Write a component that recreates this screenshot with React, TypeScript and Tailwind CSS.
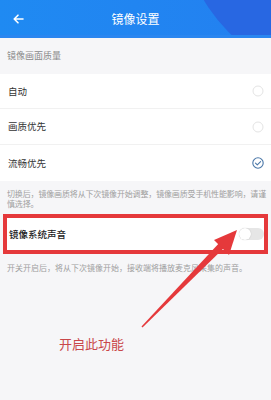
import React from "react";

const font = { fontFamily: '"Noto Sans CJK SC", "Noto Sans", sans-serif' };

function Radio({ checked }: { checked?: boolean }) {
  if (checked) {
    return (
      <svg width="12" height="12" viewBox="0 0 12 12">
        <circle cx="6" cy="6" r="5.2" fill="none" stroke="#4a77a8" strokeWidth="1.1" />
        <path d="M3.5 6.2 L5.3 7.9 L8.6 4.6" fill="none" stroke="#4a77a8" strokeWidth="1.1" strokeLinecap="round" strokeLinejoin="round" />
      </svg>
    );
  }
  return (
    <svg width="12" height="12" viewBox="0 0 12 12">
      <circle cx="6" cy="6" r="5" fill="none" stroke="#e4e4e4" strokeWidth="1" />
    </svg>
  );
}

export default function App() {
  return (
    <div className="relative w-[271px] h-[400px] overflow-hidden bg-[#f6f6f8]" style={font}>
      {/* Header */}
      <div className="relative h-[38px] overflow-hidden bg-gradient-to-r from-[#1f8af2] to-[#2380f0] flex items-center">
        <div className="absolute left-[182px] top-[-238px] w-[316px] h-[316px] rounded-full bg-[#2867e2]" />
        <div className="absolute left-0 right-0 bottom-0 h-[3px] bg-[#2a86f0]" />
        <div className="relative w-full flex items-center">
          <svg className="ml-[13px]" width="11" height="10" viewBox="0 0 11 10">
            <path d="M10 5 H1.5 M5 1.2 L1.2 5 L5 8.8" fill="none" stroke="#ffffff" strokeWidth="1.6" strokeLinecap="round" strokeLinejoin="round" />
          </svg>
          <div className="absolute left-0 right-0 text-center text-white text-[12px] leading-none">镜像设置</div>
        </div>
      </div>

      {/* Section header */}
      <div className="h-[36px] flex items-center pl-[7px] text-[9px] text-[#8a8a8a]">镜像画面质量</div>

      {/* Options */}
      <div className="bg-white">
        <div className="h-[35px] flex items-center justify-between pl-[8px] pr-[7px] border-b border-[#f1f1f1]">
          <span className="text-[9.5px] text-[#333]">自动</span>
          <Radio />
        </div>
        <div className="h-[36px] flex items-center justify-between pl-[8px] pr-[7px] border-b border-[#f1f1f1]">
          <span className="text-[9.5px] text-[#333]">画质优先</span>
          <Radio />
        </div>
        <div className="h-[36px] flex items-center justify-between pl-[8px] pr-[7px]">
          <span className="text-[9.5px] text-[#333]">流畅优先</span>
          <Radio checked />
        </div>
      </div>

      {/* Description */}
      <div className="h-[33px] pl-[7px] pr-0 pt-[8px] text-[8px] leading-[10px] tracking-[-0.15px] text-[#a0a0a0]">
        切换后，镜像画质将从下次镜像开始调整，镜像画质受手机性能影响，请谨慎选择。
      </div>

      {/* Highlighted row */}
      <div className="mx-[3px] h-[40px] border-[4px] border-[#e5393b] bg-white flex items-center justify-between pl-[2px] pr-0">
        <span className="text-[9.5px] text-[#222] font-medium">镜像系统声音</span>
        <div className="w-[25px] h-[12px] rounded-full bg-[#e6e6e6] relative">
          <div className="absolute left-0 top-0 w-[12px] h-[12px] rounded-full bg-white shadow-[0_0_1px_rgba(0,0,0,0.25)]" />
        </div>
      </div>

      <div className="pl-[7px] pt-[9px] text-[8px] leading-[10px] text-[#a0a0a0]">
        开关开启后，将从下次镜像开始，接收端将播放麦克风采集的声音。
      </div>

      <div className="absolute left-[59px] top-[336px] text-[13px] leading-[16px] text-[#c9474a]">开启此功能</div>

      {/* Arrow */}
      <svg className="absolute left-0 top-0 pointer-events-none" width="271" height="400" viewBox="0 0 271 400">
        <polygon points="141.5,326.5 142.5,327.5 226.5,245.5 221.5,240.5" fill="#e5393b" />
        <polygon points="237,230 214,240 229,255" fill="#e5393b" />
      </svg>
    </div>
  );
}
